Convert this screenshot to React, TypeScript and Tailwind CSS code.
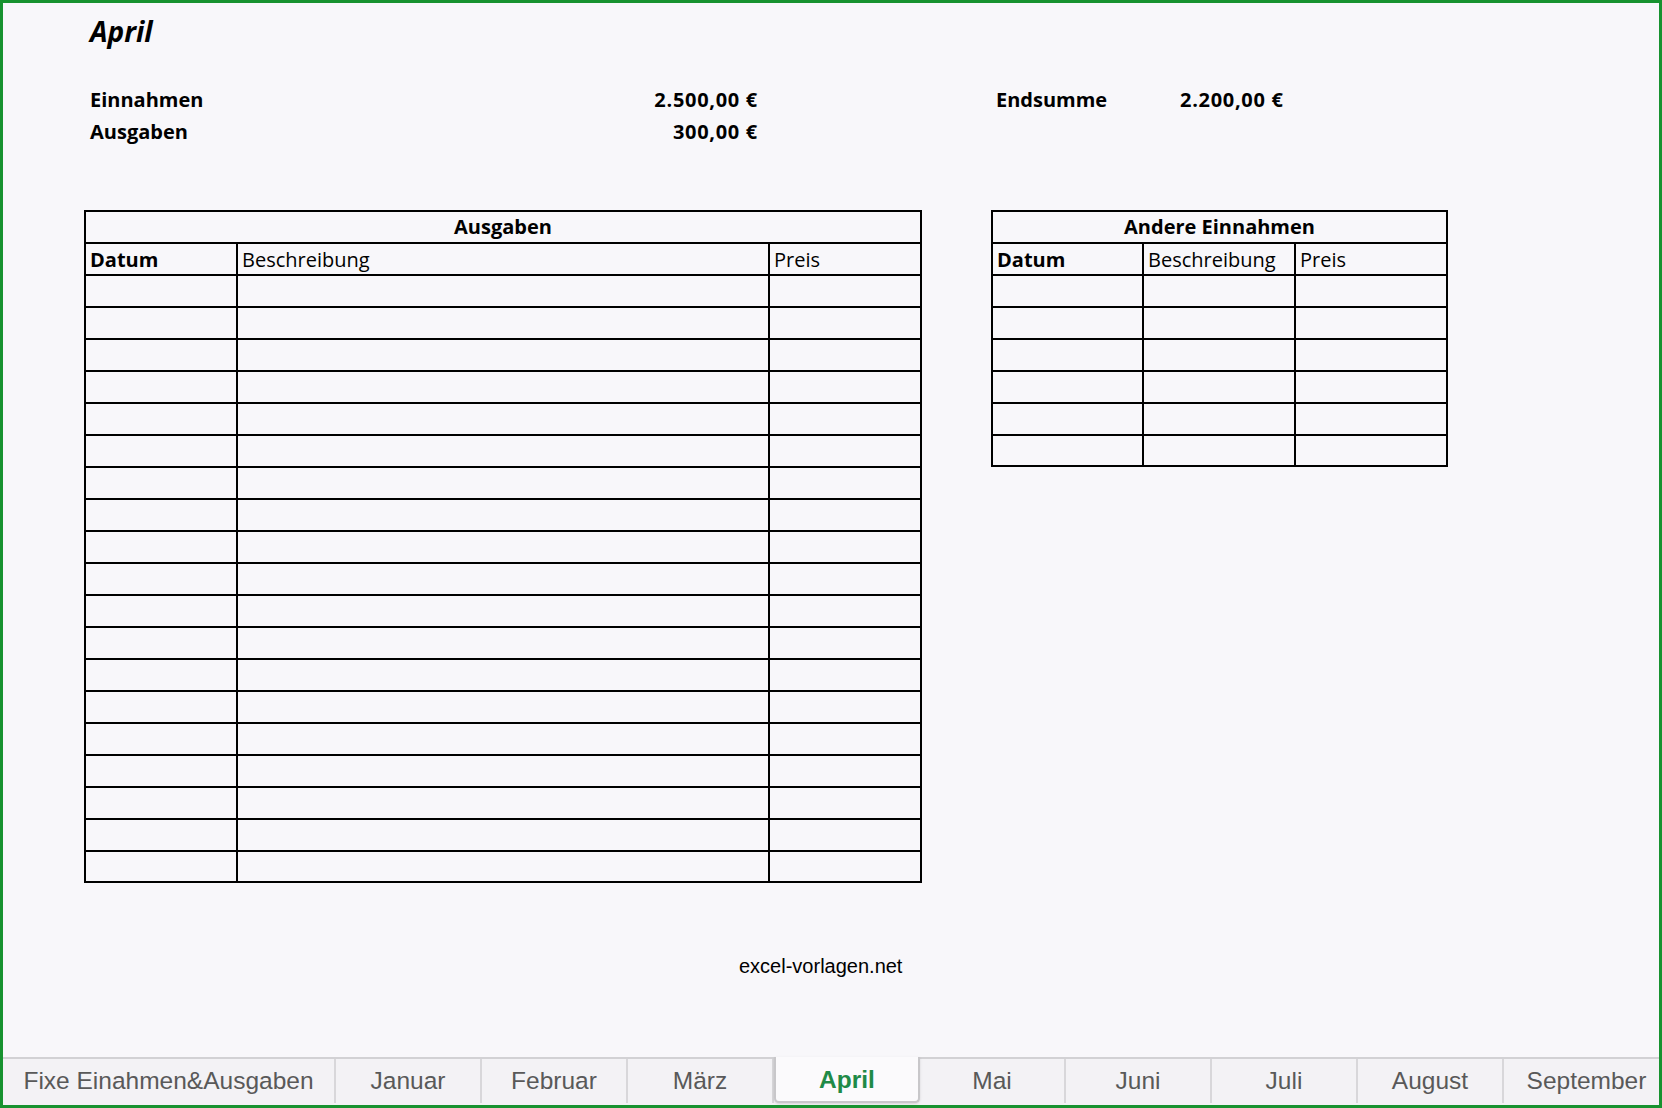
const TABS = [
  'Fixe Einahmen&Ausgaben',
  'Januar',
  'Februar',
  'März',
  'April',
  'Mai',
  'Juni',
  'Juli',
  'August',
  'September',
]

type Col = { label: string; bold?: boolean }

function Sheet({
  title,
  cols,
  rows,
  width,
  gridCols,
}: {
  title: string
  cols: Col[]
  rows: number
  width: string
  gridCols: string
}) {
  return (
    <div className={`${width} border-2 border-black text-[20px] text-black`}>
      <div className="h-[32px] border-b-2 border-black text-center font-bold leading-[30px]">{title}</div>
      <div className={`grid ${gridCols} h-[32px] border-b-2 border-black`}>
        {cols.map((c, i) => (
          <div
            key={c.label}
            className={`pl-[4px] pt-[2px] leading-[28px] ${c.bold ? 'font-bold' : ''} ${
              i < cols.length - 1 ? 'border-r-2 border-black' : ''
            }`}>
            {c.label}
          </div>
        ))}
      </div>
      {Array.from({ length: rows }).map((_, r) => (
        <div
          key={r}
          className={`grid ${gridCols} ${r < rows - 1 ? 'h-[32px] border-b-2 border-black' : 'h-[29px]'}`}>
          {cols.map((c, i) => (
            <div key={c.label} className={i < cols.length - 1 ? 'border-r-2 border-black' : ''} />
          ))}
        </div>
      ))}
    </div>
  )
}

export default function App() {
  return (
    <div className="w-[1662px] h-[1108px] border-[3px] border-[#17922f] bg-[#f8f7fa] flex flex-col font-['Open_Sans',sans-serif] text-black overflow-hidden">
      <div className="flex-1">
        {/* Title */}
        <div className="pl-[87px] pt-[10px] text-[28px] leading-[36px] font-bold italic">April</div>

        {/* Summary */}
        <div className="mt-[35px] pl-[87px] flex text-[20px] font-bold leading-[32px]">
          <div className="w-[668px]">
            <div className="flex justify-between">
              <span>Einnahmen</span>
              <span className="tracking-[0.7px]">2.500,00 €</span>
            </div>
            <div className="flex justify-between">
              <span>Ausgaben</span>
              <span className="tracking-[0.7px]">300,00 €</span>
            </div>
          </div>
          <div className="ml-[238px] flex">
            <span className="w-[184px]">Endsumme</span>
            <span className="tracking-[0.7px]">2.200,00 €</span>
          </div>
        </div>

        {/* Tables */}
        <div className="mt-[62px] pl-[81px] flex items-start gap-[69px]">
          <Sheet
            title="Ausgaben"
            width="w-[838px]"
            gridCols="grid-cols-[152px_532px_1fr]"
            rows={19}
            cols={[{ label: 'Datum', bold: true }, { label: 'Beschreibung' }, { label: 'Preis' }]}
          />
          <Sheet
            title="Andere Einnahmen"
            width="w-[457px]"
            gridCols="grid-cols-[151px_152px_1fr]"
            rows={6}
            cols={[{ label: 'Datum', bold: true }, { label: 'Beschreibung' }, { label: 'Preis' }]}
          />
        </div>

        {/* Footer */}
        <div className="mt-[71px] pl-[736px] font-['Liberation_Sans',Arial,sans-serif] text-[20px] leading-[24px]">
          excel-vorlagen.net
        </div>
      </div>

      {/* Sheet tabs */}
      <div className="h-[48px] shrink-0 bg-[#f3f2f5] border-t-2 border-[#d2d1d4] flex font-['Liberation_Sans',Arial,sans-serif] text-[24.5px] text-[#595959]">
        {TABS.map((t, i) => {
          const active = t === 'April'
          const last = i === TABS.length - 1
          const w = i === 0 ? 'w-[333px]' : last ? 'flex-1 pl-[10px]' : 'w-[146px]'
          if (active) {
            return (
              <div
                key={t}
                className={`${w} -mt-[2px] h-[46px] pt-[3px] flex items-center justify-center bg-[#fbfafc] border-x-2 border-b-2 border-[#c8c7ca] rounded-b-[5px] shadow-sm font-bold text-[#1f8a47]`}>
                {t}
              </div>
            )
          }
          return (
            <div
              key={t}
              className={`${w} h-[44px] flex items-center justify-center whitespace-nowrap ${
                last ? '' : 'border-r-2 border-[#d8d7da]'
              }`}>
              {t}
            </div>
          )
        })}
      </div>
    </div>
  )
}
